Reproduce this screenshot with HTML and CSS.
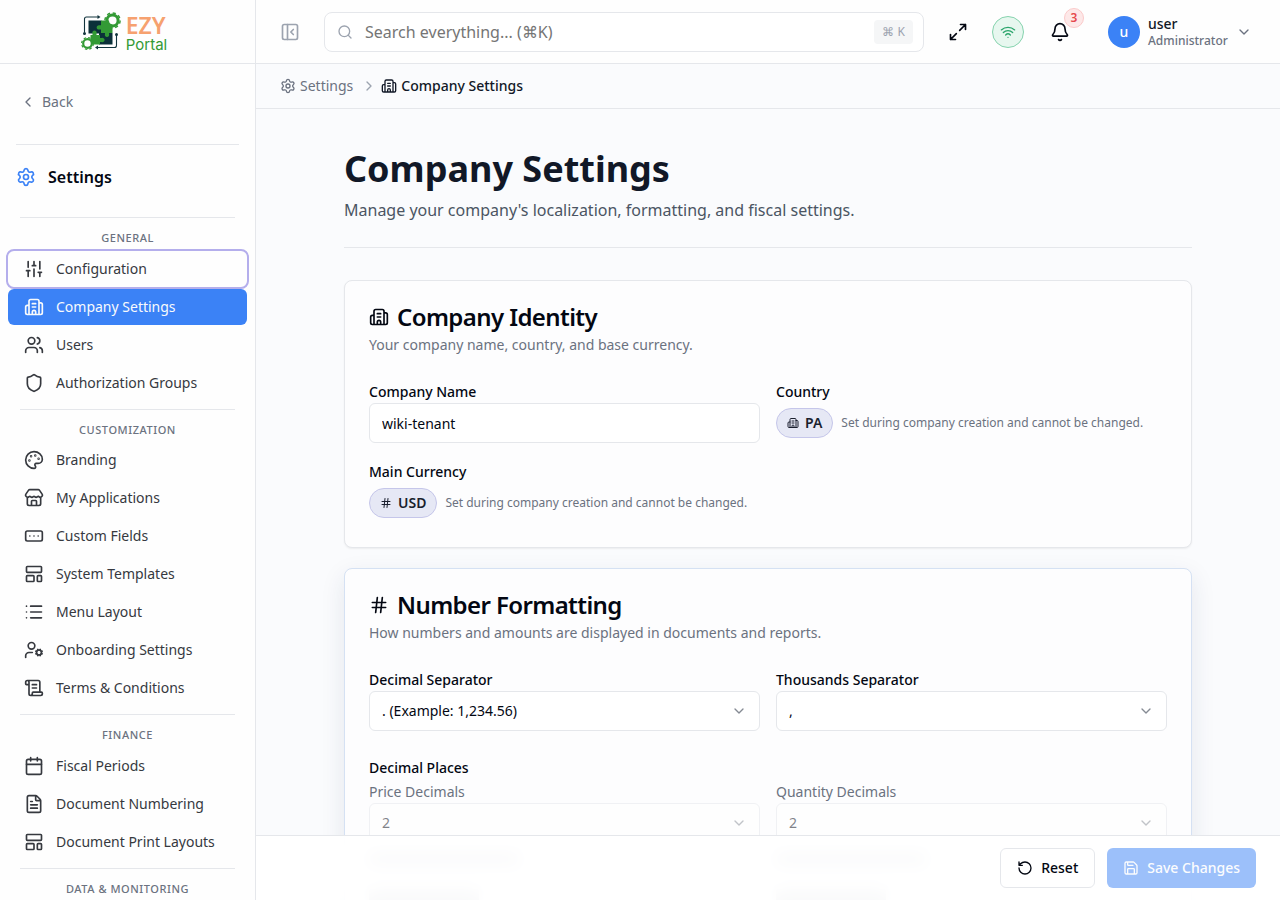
FILE: index.html
```html
<!DOCTYPE html>
<html lang="en">
<head>
    <meta charset="UTF-8">
    <meta name="viewport" content="width=device-width, initial-scale=1.0">
    <title>Company Settings - EZY Portal</title>
    <link rel="stylesheet" href="styles.css">
</head>
<body>
    <!-- Icon sprite -->
    <svg class="sprite" aria-hidden="true">
        <symbol id="i-building" viewBox="0 0 24 24"><path d="M10 12h4M10 8h4M14 21v-3a2 2 0 0 0-4 0v3M6 10H4a2 2 0 0 0-2 2v7a2 2 0 0 0 2 2h16a2 2 0 0 0 2-2V9a2 2 0 0 0-2-2h-2M6 21V5a2 2 0 0 1 2-2h8a2 2 0 0 1 2 2v16"/></symbol>
        <symbol id="i-gear" viewBox="0 0 24 24"><path d="M9.671 4.136a2.34 2.34 0 0 1 4.659 0 2.34 2.34 0 0 0 3.319 1.915 2.34 2.34 0 0 1 2.33 4.033 2.34 2.34 0 0 0 0 3.831 2.34 2.34 0 0 1-2.33 4.033 2.34 2.34 0 0 0-3.319 1.915 2.34 2.34 0 0 1-4.659 0 2.34 2.34 0 0 0-3.32-1.915 2.34 2.34 0 0 1-2.33-4.033 2.34 2.34 0 0 0 0-3.831A2.34 2.34 0 0 1 6.35 6.051a2.34 2.34 0 0 0 3.319-1.915"/><circle cx="12" cy="12" r="3"/></symbol>
        <symbol id="i-sliders" viewBox="0 0 24 24"><path d="M10 8h4M12 21v-9M12 8V3M17 16h4M19 12V3M19 21v-5M3 14h4M5 10V3M5 21v-7"/></symbol>
        <symbol id="i-users" viewBox="0 0 24 24"><path d="M16 21v-2a4 4 0 0 0-4-4H6a4 4 0 0 0-4 4v2M16 3.128a4 4 0 0 1 0 7.744M22 21v-2a4 4 0 0 0-3-3.87"/><circle cx="9" cy="7" r="4"/></symbol>
        <symbol id="i-shield" viewBox="0 0 24 24"><path d="M20 13c0 5-3.5 7.5-7.66 8.95a1 1 0 0 1-.67-.01C7.5 20.5 4 18 4 13V6a1 1 0 0 1 1-1c2 0 4.5-1.2 6.24-2.72a1.17 1.17 0 0 1 1.52 0C14.51 3.81 17 5 19 5a1 1 0 0 1 1 1z"/></symbol>
        <symbol id="i-palette" viewBox="0 0 24 24"><path d="M12 22a1 1 0 0 1 0-20 10 9 0 0 1 10 9 5 5 0 0 1-5 5h-2.25a1.75 1.75 0 0 0-1.4 2.8l.3.4a1.75 1.75 0 0 1-1.4 2.8z"/><circle cx="13.5" cy="6.5" r=".5"/><circle cx="17.5" cy="10.5" r=".5"/><circle cx="6.5" cy="12.5" r=".5"/><circle cx="8.5" cy="7.5" r=".5"/></symbol>
        <symbol id="i-store" viewBox="0 0 24 24"><path d="M15 21v-5a1 1 0 0 0-1-1h-4a1 1 0 0 0-1 1v5M17.774 10.31a1.12 1.12 0 0 0-1.549 0 2.5 2.5 0 0 1-3.451 0 1.12 1.12 0 0 0-1.548 0 2.5 2.5 0 0 1-3.452 0 1.12 1.12 0 0 0-1.549 0 2.5 2.5 0 0 1-3.77-3.248l2.889-4.184A2 2 0 0 1 7 2h10a2 2 0 0 1 1.653.873l2.895 4.192a2.5 2.5 0 0 1-3.774 3.244M4 10.95V19a2 2 0 0 0 2 2h12a2 2 0 0 0 2-2v-8.05"/></symbol>
        <symbol id="i-field" viewBox="0 0 24 24"><rect width="20" height="12" x="2" y="6" rx="2"/><path d="M12 12h.01M17 12h.01M7 12h.01"/></symbol>
        <symbol id="i-template" viewBox="0 0 24 24"><rect width="18" height="7" x="3" y="3" rx="1"/><rect width="9" height="7" x="3" y="14" rx="1"/><rect width="5" height="7" x="16" y="14" rx="1"/></symbol>
        <symbol id="i-list" viewBox="0 0 24 24"><path d="M3 5h.01M3 12h.01M3 19h.01M8 5h13M8 12h13M8 19h13"/></symbol>
        <symbol id="i-user-cog" viewBox="0 0 24 24"><path d="M10 15H6a4 4 0 0 0-4 4v2M14.305 16.53l.923-.382M15.228 13.852l-.923-.383M16.852 12.228l-.383-.923M16.852 17.772l-.383.924M19.148 12.228l.383-.923M19.53 18.696l-.382-.924M20.772 13.852l.924-.383M20.772 16.148l.924.383"/><circle cx="18" cy="15" r="3"/><circle cx="9" cy="7" r="4"/></symbol>
        <symbol id="i-scroll" viewBox="0 0 24 24"><path d="M15 12h-5M15 8h-5M19 17V5a2 2 0 0 0-2-2H4M8 21h12a2 2 0 0 0 2-2v-1a1 1 0 0 0-1-1H11a1 1 0 0 0-1 1v1a2 2 0 1 1-4 0V5a2 2 0 1 0-4 0v2a1 1 0 0 0 1 1h3"/></symbol>
        <symbol id="i-calendar" viewBox="0 0 24 24"><path d="M8 2v4M16 2v4M3 10h18"/><rect width="18" height="18" x="3" y="4" rx="2"/></symbol>
        <symbol id="i-file" viewBox="0 0 24 24"><path d="M6 22a2 2 0 0 1-2-2V4a2 2 0 0 1 2-2h8a2.4 2.4 0 0 1 1.704.706l3.588 3.588A2.4 2.4 0 0 1 20 8v12a2 2 0 0 1-2 2zM14 2v5a1 1 0 0 0 1 1h5M10 9H8M16 13H8M16 17H8"/></symbol>
        <symbol id="i-panel" viewBox="0 0 24 24"><rect width="18" height="18" x="3" y="3" rx="2"/><path d="M9 3v18M16 15l-3-3 3-3"/></symbol>
        <symbol id="i-search" viewBox="0 0 24 24"><circle cx="11" cy="11" r="8"/><path d="M21 21l-4.34-4.34"/></symbol>
        <symbol id="i-expand" viewBox="0 0 24 24"><path d="M15 3h6v6M21 3l-7 7M3 21l7-7M9 21H3v-6"/></symbol>
        <symbol id="i-wifi" viewBox="0 0 24 24"><path d="M12 20h.01M2 8.82a15 15 0 0 1 20 0M5 12.859a10 10 0 0 1 14 0M8.5 16.429a5 5 0 0 1 7 0"/></symbol>
        <symbol id="i-bell" viewBox="0 0 24 24"><path d="M10.268 21a2 2 0 0 0 3.464 0M3.262 15.326A1 1 0 0 0 4 17h16a1 1 0 0 0 .74-1.673C19.41 13.956 18 12.499 18 8A6 6 0 0 0 6 8c0 4.499-1.411 5.956-2.738 7.326"/></symbol>
        <symbol id="i-down" viewBox="0 0 24 24"><path d="M6 9l6 6 6-6"/></symbol>
        <symbol id="i-right" viewBox="0 0 24 24"><path d="M9 18l6-6-6-6"/></symbol>
        <symbol id="i-left" viewBox="0 0 24 24"><path d="M15 18l-6-6 6-6"/></symbol>
        <symbol id="i-hash" viewBox="0 0 24 24"><path d="M4 9h16M4 15h16M10 3L8 21M16 3l-2 18"/></symbol>
        <symbol id="i-reset" viewBox="0 0 24 24"><path d="M3 12a9 9 0 1 0 9-9 9.75 9.75 0 0 0-6.74 2.74L3 8M3 3v5h5"/></symbol>
        <symbol id="i-save" viewBox="0 0 24 24"><path d="M15.2 3a2 2 0 0 1 1.4.6l3.8 3.8a2 2 0 0 1 .6 1.4V19a2 2 0 0 1-2 2H5a2 2 0 0 1-2-2V5a2 2 0 0 1 2-2zM17 21v-7a1 1 0 0 0-1-1H8a1 1 0 0 0-1 1v7M7 3v4a1 1 0 0 0 1 1h7"/></symbol>
    </svg>

    <div class="app">
        <aside class="sidebar">
            <a href="#" class="brand">
                <svg class="brand-mark" viewBox="80 12 42 40" aria-hidden="true">
                    <!-- top right gear -->
                    <circle cx="112.5" cy="20.5" r="5.6" fill="none" stroke="#339a35" stroke-width="3"/>
                    <circle cx="112.5" cy="20.5" r="7.6" fill="none" stroke="#339a35" stroke-width="1.500" stroke-dasharray="3.200 2.770"/>
                    <!-- puzzle pieces -->
                    <path fill="#0b3039" d="M88.500 20.500h13v13h-13z"/>
                    <path fill="#0b3039" d="M99 33h13.500v11.500H99z"/>
                    <path fill="#339a35" d="M101 20.500h8a4 4 0 0 0 3.500 4V33h-3.500v1a2.200 2.200 0 1 1-4 0V33h-4v-3.500h-1.500a2.200 2.200 0 1 1 0-4.200h1.500z"/>
                    <path fill="#339a35" d="M90.500 35h2v-1.500a2.200 2.200 0 1 1 4 0V35h3.500v3h1.500a2.200 2.200 0 1 1 0 4H100v2.500h-9.500z"/>
                    <!-- bottom left gear -->
                    <circle cx="87.500" cy="43.500" r="4.300" fill="#fff" stroke="#339a35" stroke-width="2.200"/>
                    <circle cx="87.500" cy="43.500" r="5.900" fill="none" stroke="#339a35" stroke-width="1.200" stroke-dasharray="2.500 2.130"/>
                    <!-- connector arrows -->
                    <path fill="none" stroke="#12343d" stroke-width="1.100" d="M84.500 32.500V19a2 2 0 0 1 2-2H98M116.500 35v10.500a2 2 0 0 1-2 2H97"/>
                    <path fill="#12343d" d="M97.500 15l3 2-3 2zM98 45.500l-3 2 3 2z"/>
                    <circle cx="84.500" cy="33.500" r="1.500" fill="#12343d"/>
                    <circle cx="116.500" cy="34.500" r="1.500" fill="#12343d"/>
                </svg>
                <span class="brand-text">
                    <span class="brand-ezy">EZY</span>
                    <span class="brand-portal">Portal</span>
                </span>
            </a>

            <div class="sidebar-body">
                <div class="back-row">
                    <button type="button" class="back-btn">
                        <svg class="icon icon-sm"><use href="#i-left"/></svg>
                        Back
                    </button>
                </div>
                <div class="sidebar-title">
                    <svg class="icon"><use href="#i-gear"/></svg>
                    <span>Settings</span>
                </div>

                <nav>
                    <div class="nav-group">
                        <p class="nav-label">General</p>
                        <a href="#" class="nav-item ringed"><svg class="icon"><use href="#i-sliders"/></svg>Configuration</a>
                        <a href="#" class="nav-item active" aria-current="page"><svg class="icon"><use href="#i-building"/></svg>Company Settings</a>
                        <a href="#" class="nav-item"><svg class="icon"><use href="#i-users"/></svg>Users</a>
                        <a href="#" class="nav-item"><svg class="icon"><use href="#i-shield"/></svg>Authorization Groups</a>
                    </div>
                    <div class="nav-group">
                        <p class="nav-label">Customization</p>
                        <a href="#" class="nav-item"><svg class="icon"><use href="#i-palette"/></svg>Branding</a>
                        <a href="#" class="nav-item"><svg class="icon"><use href="#i-store"/></svg>My Applications</a>
                        <a href="#" class="nav-item"><svg class="icon"><use href="#i-field"/></svg>Custom Fields</a>
                        <a href="#" class="nav-item"><svg class="icon"><use href="#i-template"/></svg>System Templates</a>
                        <a href="#" class="nav-item"><svg class="icon"><use href="#i-list"/></svg>Menu Layout</a>
                        <a href="#" class="nav-item"><svg class="icon"><use href="#i-user-cog"/></svg>Onboarding Settings</a>
                        <a href="#" class="nav-item"><svg class="icon"><use href="#i-scroll"/></svg>Terms &amp; Conditions</a>
                    </div>
                    <div class="nav-group">
                        <p class="nav-label">Finance</p>
                        <a href="#" class="nav-item"><svg class="icon"><use href="#i-calendar"/></svg>Fiscal Periods</a>
                        <a href="#" class="nav-item"><svg class="icon"><use href="#i-file"/></svg>Document Numbering</a>
                        <a href="#" class="nav-item"><svg class="icon"><use href="#i-template"/></svg>Document Print Layouts</a>
                    </div>
                    <div class="nav-group">
                        <p class="nav-label">Data &amp; Monitoring</p>
                    </div>
                </nav>
            </div>
        </aside>

        <div class="content">
            <header class="topbar">
                <button type="button" class="icon-btn muted" aria-label="Collapse sidebar">
                    <svg class="icon"><use href="#i-panel"/></svg>
                </button>
                <div class="search">
                    <svg class="icon icon-sm"><use href="#i-search"/></svg>
                    <input type="search" placeholder="Search everything... (⌘K)" aria-label="Search everything">
                    <kbd>⌘ K</kbd>
                </div>
                <div class="actions">
                    <button type="button" class="icon-btn" aria-label="Full screen">
                        <svg class="icon"><use href="#i-expand"/></svg>
                    </button>
                    <button type="button" class="status" aria-label="Connection status">
                        <svg class="icon icon-sm"><use href="#i-wifi"/></svg>
                    </button>
                    <button type="button" class="icon-btn bell" aria-label="Notifications">
                        <svg class="icon"><use href="#i-bell"/></svg>
                        <span class="count">3</span>
                    </button>
                    <button type="button" class="account">
                        <span class="avatar">u</span>
                        <span class="account-text">
                            <span class="account-name">user</span>
                            <span class="account-role">Administrator</span>
                        </span>
                        <svg class="icon icon-sm"><use href="#i-down"/></svg>
                    </button>
                </div>
            </header>

            <nav class="breadcrumb" aria-label="Breadcrumb">
                <a href="#"><svg class="icon icon-sm"><use href="#i-gear"/></svg>Settings</a>
                <svg class="icon icon-sm separator"><use href="#i-right"/></svg>
                <span class="current"><svg class="icon icon-sm"><use href="#i-building"/></svg>Company Settings</span>
            </nav>

            <form class="scroller">
                <main class="page">
                    <div class="page-head">
                        <h1>Company Settings</h1>
                        <p>Manage your company's localization, formatting, and fiscal settings.</p>
                    </div>

                    <section class="card">
                        <h2><svg class="icon"><use href="#i-building"/></svg>Company Identity</h2>
                        <p class="card-sub">Your company name, country, and base currency.</p>
                        <div class="fields">
                            <div class="field">
                                <label for="companyName">Company Name</label>
                                <input type="text" id="companyName" class="control" value="wiki-tenant">
                            </div>
                            <div class="field">
                                <span class="field-name">Country</span>
                                <div class="locked">
                                    <span class="pill"><svg class="icon icon-xs"><use href="#i-building"/></svg>PA</span>
                                    <span class="note">Set during company creation and cannot be changed.</span>
                                </div>
                            </div>
                            <div class="field">
                                <span class="field-name">Main Currency</span>
                                <div class="locked">
                                    <span class="pill"><svg class="icon icon-xs"><use href="#i-hash"/></svg>USD</span>
                                    <span class="note">Set during company creation and cannot be changed.</span>
                                </div>
                            </div>
                        </div>
                    </section>

                    <section class="card raised">
                        <h2><svg class="icon"><use href="#i-hash"/></svg>Number Formatting</h2>
                        <p class="card-sub">How numbers and amounts are displayed in documents and reports.</p>
                        <div class="fields">
                            <div class="field">
                                <label for="decimalSep">Decimal Separator</label>
                                <div class="select">
                                    <select id="decimalSep" class="control"><option>. (Example: 1,234.56)</option></select>
                                    <svg class="icon icon-sm"><use href="#i-down"/></svg>
                                </div>
                            </div>
                            <div class="field">
                                <label for="thousandsSep">Thousands Separator</label>
                                <div class="select">
                                    <select id="thousandsSep" class="control"><option>,</option></select>
                                    <svg class="icon icon-sm"><use href="#i-down"/></svg>
                                </div>
                            </div>
                        </div>
                        <h3>Decimal Places</h3>
                        <div class="fields">
                            <div class="field light">
                                <label for="priceDec">Price Decimals</label>
                                <div class="select">
                                    <select id="priceDec" class="control" disabled><option>2</option></select>
                                    <svg class="icon icon-sm"><use href="#i-down"/></svg>
                                </div>
                                <span class="line"></span>
                                <span class="line short"></span>
                            </div>
                            <div class="field light">
                                <label for="qtyDec">Quantity Decimals</label>
                                <div class="select">
                                    <select id="qtyDec" class="control" disabled><option>2</option></select>
                                    <svg class="icon icon-sm"><use href="#i-down"/></svg>
                                </div>
                                <span class="line"></span>
                                <span class="line short"></span>
                            </div>
                        </div>
                    </section>
                </main>

                <footer class="savebar">
                    <button type="reset" class="btn"><svg class="icon icon-sm"><use href="#i-reset"/></svg>Reset</button>
                    <button type="submit" class="btn primary" disabled><svg class="icon icon-sm"><use href="#i-save"/></svg>Save Changes</button>
                </footer>
            </form>
        </div>
    </div>
</body>
</html>
```
FILE: styles.css
```css
* {
    margin: 0;
    padding: 0;
    box-sizing: border-box;
}

body {
    font-family: 'Noto Sans', 'Open Sans', sans-serif;
    font-size: 14px;
    line-height: 20px;
    color: #030712;
    background: #fafbfd;
}

a {
    color: inherit;
    text-decoration: none;
}

button,
input,
select {
    font: inherit;
    color: inherit;
}

button {
    background: none;
    border: none;
    cursor: pointer;
}

.sprite {
    display: none;
}

.icon {
    width: 20px;
    height: 20px;
    flex-shrink: 0;
    fill: none;
    stroke: currentColor;
    stroke-width: 2;
    stroke-linecap: round;
    stroke-linejoin: round;
}

.icon-sm {
    width: 16px;
    height: 16px;
}

.icon-xs {
    width: 12px;
    height: 12px;
}

.app {
    display: grid;
    grid-template-columns: 256px minmax(0, 1fr);
    height: 100vh;
}

/* Sidebar */
.sidebar {
    display: flex;
    flex-direction: column;
    min-height: 0;
    background: #fefefe;
    border-right: 1px solid #e5e7eb;
}

.brand {
    display: flex;
    align-items: center;
    justify-content: center;
    gap: 4px;
    height: 64px;
    flex-shrink: 0;
    padding-right: 8px;
    border-bottom: 1px solid #e5e7eb;
}

.brand-mark {
    width: 42px;
    height: 40px;
}

.brand-text {
    display: flex;
    flex-direction: column;
    gap: 2px;
    padding-top: 4px;
}

.brand-ezy {
    font-size: 23px;
    font-weight: 600;
    line-height: 20px;
    color: #f6a16f;
}

.brand-portal {
    font-family: Inter, sans-serif;
    font-size: 15px;
    line-height: 16px;
    color: #339a35;
}

.sidebar-body {
    flex: 1;
    overflow: hidden;
}

.back-row {
    margin: 0 16px;
    padding: 20px 0 24px;
    border-bottom: 1px solid #e5e7eb;
}

.back-btn {
    display: flex;
    align-items: center;
    gap: 6px;
    height: 36px;
    padding: 0 4px;
    color: #6b7280;
}

.sidebar-title {
    display: flex;
    align-items: center;
    gap: 12px;
    padding: 20px 16px 28px;
    font-size: 16px;
    font-weight: 600;
    line-height: 24px;
}

.sidebar-title .icon {
    color: #3b82f6;
}

.nav-group {
    display: flex;
    flex-direction: column;
    gap: 2px;
    padding: 0 8px 8px;
}

.nav-label {
    margin: 0 12px;
    padding: 12px 0 2px;
    border-top: 1px solid #e5e7eb;
    font-size: 11px;
    font-weight: 500;
    line-height: 1.5;
    letter-spacing: 0.05em;
    text-align: center;
    text-transform: uppercase;
    color: #6b7280;
}

.nav-item {
    display: flex;
    align-items: center;
    gap: 12px;
    height: 36px;
    padding: 0 16px;
    border-radius: 6px;
    color: #36393f;
}

.nav-item.active {
    background: #3b82f6;
    color: #f8fafc;
}

.nav-item.ringed {
    outline: 2px solid #b4aeec;
}

/* Top bar */
.content {
    display: flex;
    flex-direction: column;
    min-width: 0;
    min-height: 0;
}

.topbar {
    display: flex;
    align-items: center;
    gap: 16px;
    height: 64px;
    flex-shrink: 0;
    padding: 0 28px 0 16px;
    background: #fefefe;
    border-bottom: 1px solid #e5e7eb;
}

.icon-btn {
    display: flex;
    align-items: center;
    justify-content: center;
    width: 36px;
    height: 36px;
}

.icon-btn.muted {
    color: #9ca3af;
}

.search {
    display: flex;
    align-items: center;
    gap: 12px;
    flex: 1;
    max-width: 600px;
    height: 40px;
    padding: 0 10px 0 12px;
    background: #fff;
    border: 1px solid #e5e7eb;
    border-radius: 8px;
    color: #9ca3af;
}

.search input {
    flex: 1;
    min-width: 0;
    border: none;
    outline: none;
    background: none;
    font-size: 16px;
    color: #030712;
}

.search input::placeholder {
    color: #757575;
}

kbd {
    padding: 2px 8px;
    border-radius: 4px;
    background: #f5f6f7;
    font-family: inherit;
    font-size: 12px;
}

.actions {
    display: flex;
    align-items: center;
    gap: 16px;
    margin-left: auto;
}

.status {
    display: flex;
    align-items: center;
    justify-content: center;
    width: 32px;
    height: 32px;
    border: 1px solid #86d3ae;
    border-radius: 50%;
    background: #e7f7ef;
    color: #2ba56c;
}

.bell {
    position: relative;
    width: 40px;
}

.count {
    position: absolute;
    top: -6px;
    right: -4px;
    width: 20px;
    height: 20px;
    border: 1px solid #fbcaca;
    border-radius: 50%;
    background: #fde8e8;
    font-size: 12px;
    font-weight: 600;
    line-height: 18px;
    color: #e5484d;
}

.account {
    display: flex;
    align-items: center;
    gap: 8px;
    padding-left: 12px;
    text-align: left;
}

.account > .icon {
    color: #6b7280;
}

.avatar {
    width: 32px;
    height: 32px;
    border-radius: 50%;
    background: #3b82f6;
    font-weight: 500;
    line-height: 32px;
    text-align: center;
    color: #fff;
}

.account-text {
    display: flex;
    flex-direction: column;
    min-width: 80px;
}

.account-name {
    font-weight: 500;
    line-height: 18px;
    color: #111827;
}

.account-role {
    font-size: 12px;
    font-weight: 500;
    line-height: 16px;
    color: #6b7280;
}

/* Breadcrumb */
.breadcrumb {
    display: flex;
    align-items: center;
    gap: 4px;
    padding: 12px 24px;
    border-bottom: 1px solid #e5e7eb;
    color: #6b7280;
}

.breadcrumb a,
.breadcrumb .current {
    display: flex;
    align-items: center;
    gap: 4px;
}

.breadcrumb .current {
    font-weight: 500;
    color: #111827;
}

.breadcrumb .separator {
    margin-left: 4px;
    color: #9ca3af;
}

/* Page */
.scroller {
    flex: 1;
    min-height: 0;
    overflow-y: auto;
    scrollbar-width: none;
}

.page {
    max-width: 896px;
    margin: 0 auto;
    padding: 36px 24px;
}

.page-head {
    padding-bottom: 24px;
    margin-bottom: 32px;
    border-bottom: 1px solid #e5e7eb;
}

h1 {
    font-size: 36px;
    font-weight: 700;
    line-height: 48px;
    color: #111827;
}

.page-head p {
    margin-top: 4px;
    font-size: 16px;
    line-height: 26px;
    color: #4b5563;
}

.card {
    margin-bottom: 20px;
    padding: 24px;
    background: #fdfdfe;
    border: 1px solid #e5e7eb;
    border-radius: 8px;
    box-shadow: 0 1px 2px rgba(0, 0, 0, 0.06);
}

.card.raised {
    border-color: #d5e1f3;
    box-shadow: 0 8px 24px rgba(30, 50, 90, 0.1);
}

h2 {
    display: flex;
    align-items: center;
    gap: 8px;
    font-size: 24px;
    font-weight: 600;
    line-height: 24px;
    letter-spacing: -0.025em;
}

.card-sub {
    margin: 6px 0 28px;
    color: #6b7280;
}

h3 {
    margin: 28px 0 6px;
    font-size: 14px;
    font-weight: 500;
    line-height: 18px;
}

.fields {
    display: grid;
    grid-template-columns: 1fr 1fr;
    gap: 20px 16px;
}

.field label,
.field-name {
    display: block;
    margin-bottom: 2px;
    font-weight: 500;
    line-height: 18px;
}

.field.light label {
    font-weight: 400;
    color: #6b7280;
}

.control {
    width: 100%;
    height: 40px;
    padding: 0 12px;
    background: #fff;
    border: 1px solid #e5e7eb;
    border-radius: 6px;
}

.select {
    display: grid;
    align-items: center;
}

.select > * {
    grid-area: 1 / 1;
}

.select .icon {
    justify-self: end;
    margin-right: 13px;
    pointer-events: none;
    color: #858a93;
}

select.control {
    appearance: none;
}

select.control:disabled,
select.control:disabled + .icon {
    opacity: 0.5;
}

.locked {
    display: flex;
    align-items: center;
    gap: 8px;
    padding: 5px 0;
}

.pill {
    display: flex;
    align-items: center;
    gap: 6px;
    height: 30px;
    padding: 0 10px;
    border: 1px solid #c5c6ea;
    border-radius: 15px;
    background: #e6e8f5;
    font-weight: 600;
    color: #1a1f2e;
}

.note {
    font-size: 12px;
    line-height: 16px;
    color: #6b7280;
}

/* soft lines seen through the save bar */
.line {
    display: block;
    width: 150px;
    height: 12px;
    margin-top: 10px;
    background: #b8bcc4;
}

.line.short {
    width: 110px;
    margin-top: 24px;
}

/* Save bar */
.savebar {
    position: sticky;
    bottom: 0;
    display: flex;
    justify-content: flex-end;
    gap: 12px;
    padding: 12px 24px;
    background: rgba(255, 255, 255, 0.92);
    border-top: 1px solid #e5e7eb;
    backdrop-filter: blur(8px);
}

.btn {
    display: flex;
    align-items: center;
    gap: 8px;
    height: 40px;
    padding: 0 16px;
    background: #fff;
    border: 1px solid #e5e7eb;
    border-radius: 6px;
    font-weight: 500;
}

.btn.primary {
    background: #3b82f6;
    border: none;
    color: #f8fafc;
    opacity: 0.5;
}
```
